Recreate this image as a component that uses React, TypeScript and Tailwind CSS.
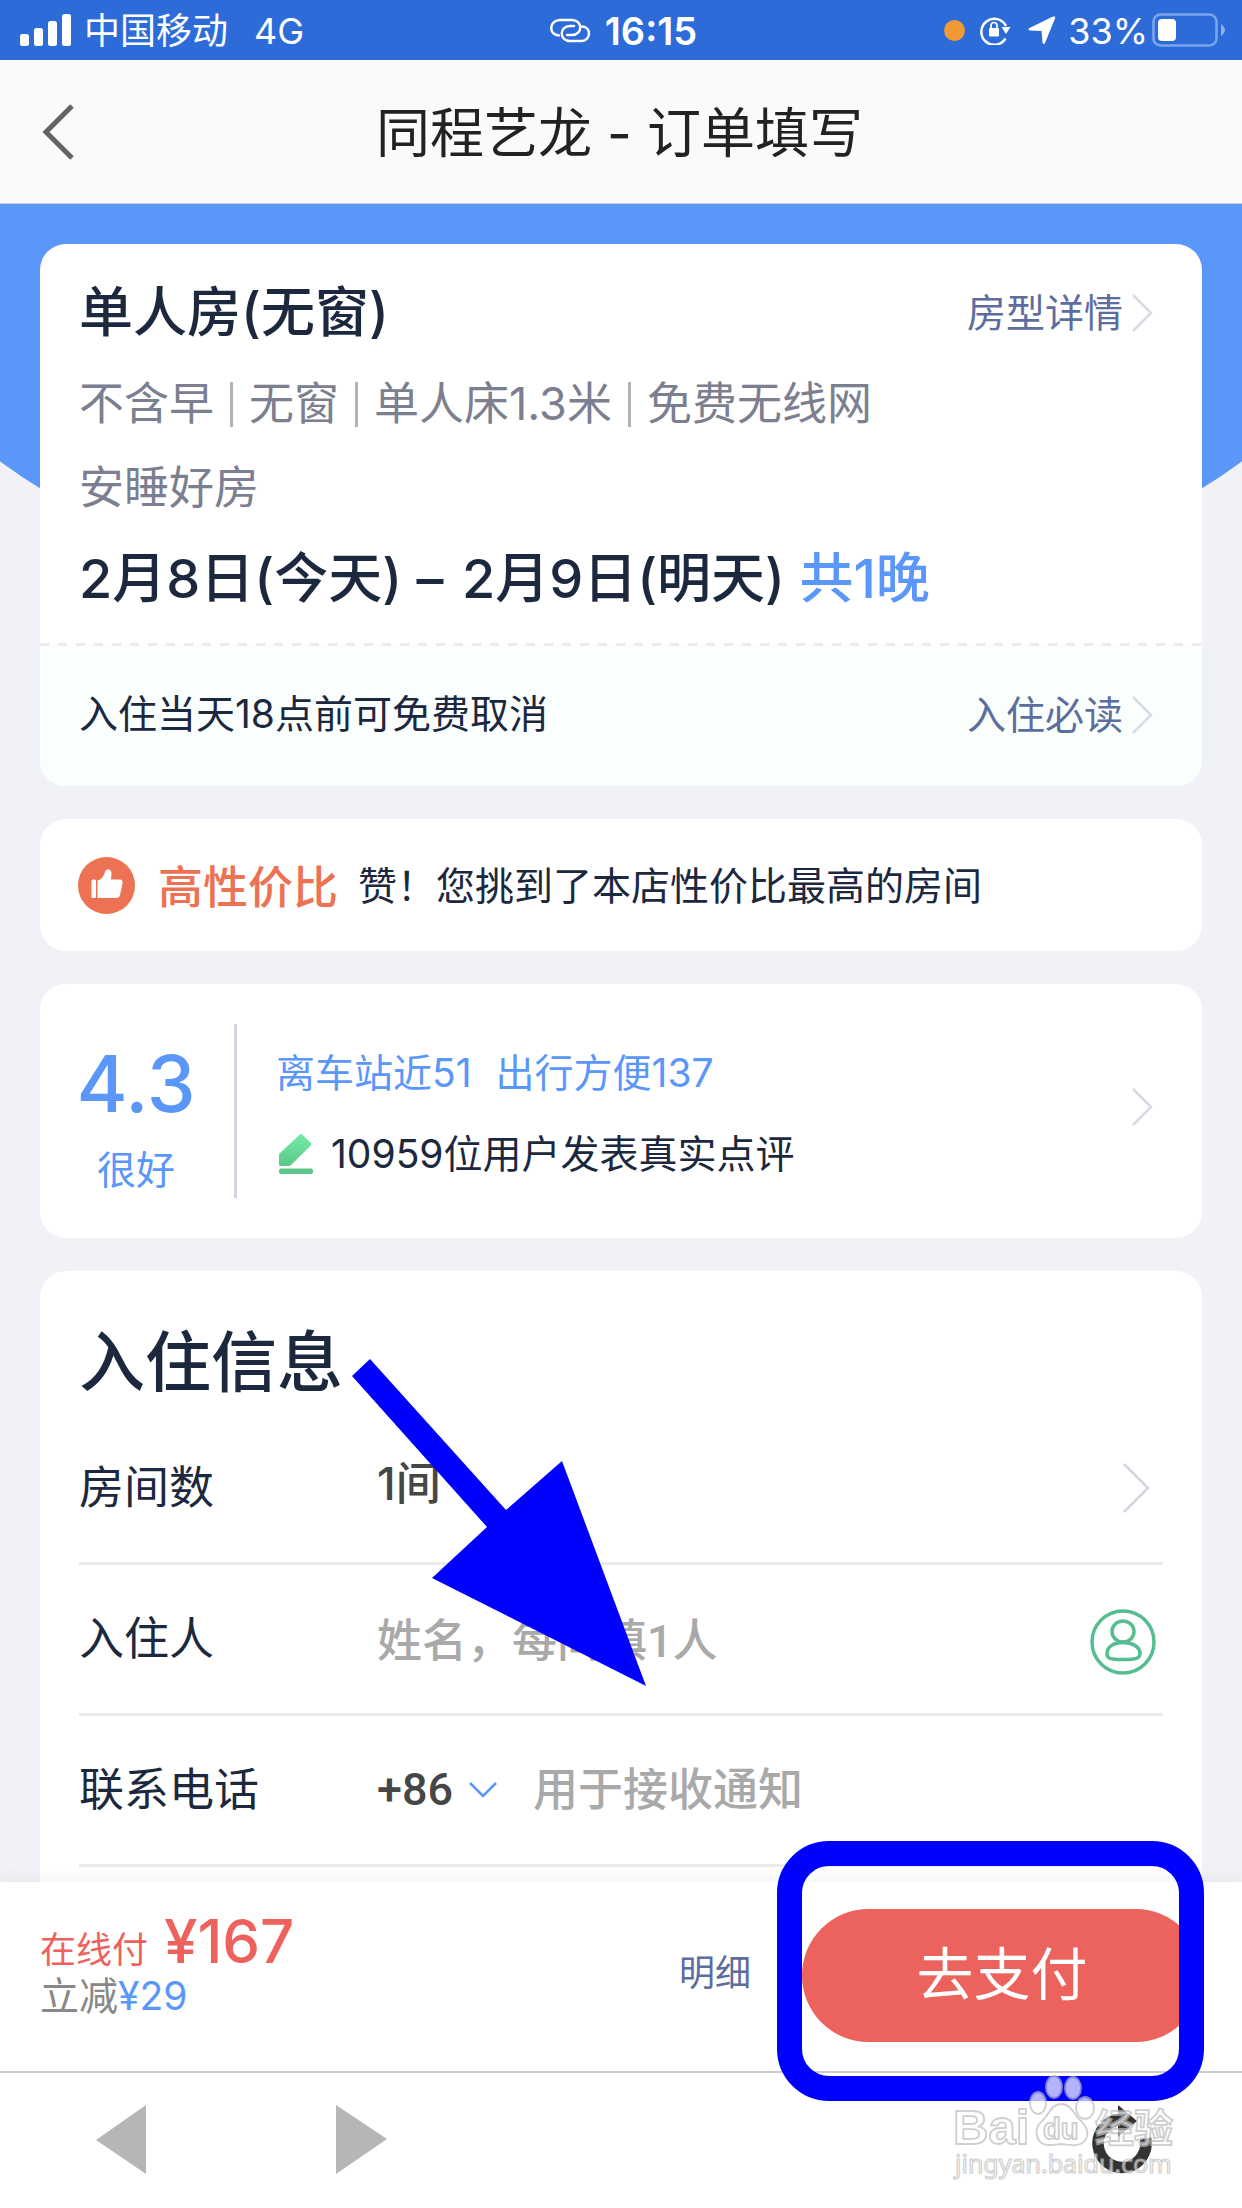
import React from "react";

function Chevron({ large = false }: { large?: boolean }) {
  return large ? (
    <svg className="h-[52px] w-7" viewBox="0 0 28 52" fill="none" aria-hidden="true">
      <path d="M2 2 26 26 2 50" stroke="#d3d8e3" strokeWidth="3" />
    </svg>
  ) : (
    <svg className="h-10 w-[22px]" viewBox="0 0 22 40" fill="none" aria-hidden="true">
      <path d="M2 2 20 20 2 38" stroke="#d8dbe4" strokeWidth="2.5" />
    </svg>
  );
}

function StatusBar() {
  return (
    <div className="flex h-[60px] items-center justify-between bg-[#2d6bd9] pr-4 pl-5 text-4xl text-white">
      <div className="flex flex-1 items-center">
        <svg className="mr-[13px] h-8 w-[51px]" viewBox="0 0 51 32" fill="#fff" aria-hidden="true">
          <rect x="0" y="20" width="9" height="12" rx="2.5" />
          <rect x="14" y="14" width="9" height="18" rx="2.5" />
          <rect x="28" y="7" width="9" height="25" rx="2.5" />
          <rect x="42" y="0" width="9" height="32" rx="2.5" />
        </svg>
        <span className="pt-0.5">中国移动</span>
        <span className="ml-[26px] pt-0.5">4G</span>
      </div>
      <div className="flex items-center gap-3.5">
        <svg className="h-7 w-[42px]" viewBox="0 0 42 28" fill="none" stroke="#fff" strokeWidth="2.4" strokeLinecap="round" aria-hidden="true">
          <path d="M10 19.500C-1 19 0 4 11 4h12c11 0 11 15 0 15h-5" />
          <path d="M33 10.500C43 11 42 25 32 25H21C10 25 10 10 21 10h4" />
        </svg>
        <span className="pt-0.5 text-[38px] font-semibold">16:15</span>
      </div>
      <div className="flex flex-1 items-center justify-end">
        <span className="mr-3.5 size-[21px] rounded-full bg-[#f09a37]" />
        <svg className="mr-[17px] h-[30px] w-8" viewBox="0 0 32 30" aria-hidden="true">
          <path d="M26.500 23.500A13 13 0 1 1 27 11" fill="none" stroke="#fff" strokeWidth="2.500" />
          <path d="M22.500 12h9l-4.500 7z" fill="#fff" />
          <rect x="10" y="13" width="10" height="8.500" rx="1" fill="#fff" />
          <path d="M12 13V10.500a3 3 0 0 1 6 0V13" fill="none" stroke="#fff" strokeWidth="1.700" />
        </svg>
        <svg className="mr-3 h-[29px] w-7" viewBox="0 0 28 29" aria-hidden="true">
          <path d="M27 2.500 17 27q-1.800 2.500-2.500-.8L13.500 15 2 14.500q-3-.8-.5-2.500L24.500.7Q28-.3 27 2.500Z" fill="#fff" />
        </svg>
        <span className="pt-0.5">33%</span>
        <svg className="ml-1 h-[34px] w-[74px]" viewBox="0 0 74 34" aria-hidden="true">
          <rect x="1.500" y="1.500" width="63" height="31" rx="7" fill="none" stroke="#7ba5ea" strokeWidth="2.600" />
          <rect x="6" y="6" width="18" height="22" rx="4" fill="#fff" />
          <path d="M69 11q8 6 0 12z" fill="#8fb2ec" />
        </svg>
      </div>
    </div>
  );
}

function NavBar() {
  return (
    <header className="relative flex h-36 items-center justify-center border-b border-[#c9cdd4] bg-[#fafafa]">
      <button type="button" aria-label="返回" className="absolute left-10">
        <svg className="h-[58px] w-9" viewBox="0 0 36 58" fill="none" aria-hidden="true">
          <path d="M32 3 6 29l26 26" stroke="#636363" strokeWidth="5" />
        </svg>
      </button>
      <h1 className="pt-[3px] pr-[3px] text-[54px] text-[#222]">同程艺龙 - 订单填写</h1>
    </header>
  );
}

function Tag({ children, last = false }: { children: React.ReactNode; last?: boolean }) {
  return last ? (
    <li>{children}</li>
  ) : (
    <li className="flex items-center">
      {children}
      <span className="mx-4 h-[45px] w-[3px] bg-[#b3b3b3]" />
    </li>
  );
}

function DetailLink({ children }: { children: React.ReactNode }) {
  return (
    <a href="#" className="flex items-center gap-2 text-[39px] leading-[54px] text-[#5c6d9e]">
      {children}
      <Chevron />
    </a>
  );
}

function RoomCard() {
  return (
    <section className="overflow-hidden rounded-[26px] bg-white">
      <div className="px-[39px] pt-[31px] pb-[26px]">
        <div className="flex items-center justify-between pr-2.5">
          <h2 className="text-[54px] leading-[76px] font-medium">单人房(无窗)</h2>
          <DetailLink>房型详情</DetailLink>
        </div>
        <ul className="my-[11px] flex flex-wrap text-[45px] leading-[84px] text-[#7b7f8f]">
          <Tag>不含早</Tag>
          <Tag>无窗</Tag>
          <Tag>单人床1.3米</Tag>
          <Tag last>免费无线网</Tag>
          <li className="basis-full">安睡好房</li>
        </ul>
        <p className="text-[54px] leading-[76px] font-medium">
          2月8日(今天) <span className="mr-1">–</span> 2月9日(明天) <span className="text-[#5b96f9]">共1晚</span>
        </p>
      </div>
      <div className="h-[3px] bg-[repeating-linear-gradient(90deg,#ebebeb_0_9px,#fafffd_9px_18px)]" />
      <div className="flex h-[140px] items-center justify-between bg-[#fafffd] pr-[49px] pb-[3px] pl-[39px]">
        <p className="text-[39px]">入住当天18点前可免费取消</p>
        <DetailLink>入住必读</DetailLink>
      </div>
    </section>
  );
}

function ValueCard() {
  return (
    <section className="flex h-[132px] items-center rounded-[26px] bg-white px-[38px]">
      <svg className="size-[57px]" viewBox="0 0 57 57" aria-hidden="true">
        <circle cx="28.500" cy="28.500" r="28.500" fill="#ed7153" />
        <rect x="13.500" y="22.500" width="4.500" height="18.500" rx="1.500" fill="#fff" />
        <path d="M19.500 23.500c4-1 6-4 7.500-8.500.5-3.500 6-4 6.500 1 .2 2.500-.3 4.500-.8 6.500H42c2 0 3 1.500 2.600 3.500L42 38c-.5 2-1.500 3-3.500 3h-19z" fill="#fff" />
      </svg>
      <strong className="ml-[23px] pt-[5px] text-[45px] font-medium text-[#ed7153]">高性价比</strong>
      <span className="ml-5 pt-[3px] text-[39px]">赞！您挑到了本店性价比最高的房间</span>
    </section>
  );
}

function ReviewCard() {
  return (
    <section className="flex h-[254px] items-center rounded-[26px] bg-white pr-[49px] pl-[39px] text-[39px]">
      <div className="flex w-[114px] flex-col items-center pt-[11px] text-[#5b96f9]">
        <span className="text-[78px] leading-[94px] font-medium">4.3</span>
        <span className="mt-3 leading-[54px]">很好</span>
      </div>
      <div className="mr-[39px] ml-[41px] h-[174px] w-[3px] bg-[#d0d6e2]" />
      <div className="flex flex-1 flex-col gap-[27px] pt-[5px] leading-[54px]">
        <p className="flex gap-6 text-[#5b96f9]">
          <span>离车站近51</span>
          <span>出行方便137</span>
        </p>
        <p className="flex items-center">
          <svg className="mr-[18px] ml-[3px] h-10 w-[34px]" viewBox="0 0 34 40" aria-hidden="true">
            <defs>
              <linearGradient id="pen" x1="0" y1="0" x2="0" y2="1">
                <stop offset="0" stopColor="#74eba8" />
                <stop offset="1" stopColor="#5cc888" />
              </linearGradient>
            </defs>
            <path d="M0 31V21.500q0-1.500 1-2.500L20.500.8q1.500-1.500 3 0l8.300 8.200q1 1.200 0 2.500L12 31q-1 1-2.500 1H1.500Q0 32 0 31Z" fill="url(#pen)" />
            <rect y="34.500" width="34" height="5.500" rx="2" fill="#5cc587" />
          </svg>
          <span>10959位用户发表真实点评</span>
        </p>
      </div>
      <a href="#" aria-label="查看点评" className="pb-2">
        <Chevron />
      </a>
    </section>
  );
}

const rowClass = "flex h-[151px] items-center border-b-[3px] border-[#ebebeb]";
const labelClass = "w-[298px] shrink-0";

function GuestForm() {
  return (
    <section className="relative shrink-0 rounded-t-[26px] bg-white px-[39px] pt-[51px] pb-40 text-[45px]">
      <h2 className="mb-3 text-[66px] leading-[80px] font-medium">入住信息</h2>
      <div className={rowClass}>
        <span className={labelClass} id="rooms">房间数</span>
        <button type="button" aria-labelledby="rooms" className="flex flex-1 items-center justify-between pr-[13px] text-left font-medium text-[#464646]">
          <span className="pb-2">1间</span>
          <Chevron large />
        </button>
      </div>
      <div className={rowClass}>
        <label className={labelClass} htmlFor="guest">入住人</label>
        <input id="guest" placeholder="姓名，每间填1人" className="min-w-0 flex-1 pt-[5px] font-[Roboto,'Noto_Sans_CJK_SC',sans-serif] font-medium outline-none placeholder:text-[#a9a9a9]" />
        <button type="button" aria-label="选择联系人" className="mr-[7px] pt-[5px]">
          <svg className="size-[66px]" viewBox="0 0 66 66" fill="none" stroke="#56bd91" strokeWidth="3.500" aria-hidden="true">
            <circle cx="33" cy="33" r="31" />
            <ellipse cx="33" cy="22.500" rx="11" ry="10.500" />
            <path d="M33 33.500c-9 0-16 4-16 11 0 5 3 6 16 6s17-1 17-6c0-7-8-11-17-11Z" />
          </svg>
        </button>
      </div>
      <div className={rowClass}>
        <label className={labelClass} htmlFor="phone">联系电话</label>
        <div className="relative mr-9 flex items-center">
          <select aria-label="国家区号" className="w-[120px] appearance-none font-[Roboto,sans-serif] font-medium text-[#464646] outline-none">
            <option>+86</option>
          </select>
          <svg className="pointer-events-none absolute right-0 h-4 w-7" viewBox="0 0 28 16" fill="none" aria-hidden="true">
            <path d="M1 1l13 13L27 1" stroke="#5b96f9" strokeWidth="2.500" />
          </svg>
        </div>
        <input id="phone" type="tel" placeholder="用于接收通知" className="min-w-0 flex-1 font-medium outline-none placeholder:text-[#a9a9a9]" />
      </div>
      <svg className="pointer-events-none absolute top-[88px] left-[312px] h-[327px] w-[294px]" viewBox="0 0 294 327" fill="#00f" aria-hidden="true">
        <path d="M18 0 154 151 210 102 294 327 80 219 135 168 0 17Z" />
      </svg>
    </section>
  );
}

function PayBar() {
  return (
    <div className="flex h-[189px] items-center bg-white px-10 pb-[3px] shadow-[0_-4px_14px_rgba(40,60,60,0.06)]">
      <div className="flex-1 pb-5">
        <p className="flex items-baseline gap-4 text-4xl text-[#ee625d]">
          在线付 <strong className="text-6xl font-medium">¥167</strong>
        </p>
        <p className="mt-0.5 text-[39px] leading-[46px] text-[#888]">
          立减<span className="text-[#5b96f9]">¥29</span>
        </p>
      </div>
      <button type="button" className="mr-[51px] pb-1 text-4xl text-[#5c6d9e]">明细</button>
      <div className="relative">
        <button type="button" className="block h-[133px] w-[400px] rounded-full bg-[#ec625d] text-[57px] text-white">去支付</button>
        <div className="pointer-events-none absolute -top-[68px] -right-[2px] -bottom-[59px] -left-[25px] z-10 rounded-[52px] border-[25px] border-[#00f]" />
      </div>
    </div>
  );
}

function Watermark() {
  return (
    <svg className="pointer-events-none absolute right-[60px] bottom-6 z-20 h-[110px] w-[236px]" viewBox="946 2074 236 110" opacity="0.7" fill="#fff" stroke="#bbb" strokeWidth="1.800" aria-hidden="true">
      <text x="953" y="2144" fontFamily="Liberation Sans, sans-serif" fontWeight="700" fontSize="49">Bai</text>
      <ellipse cx="1038" cy="2103" rx="8" ry="11" />
      <ellipse cx="1054" cy="2087" rx="8" ry="11" />
      <ellipse cx="1073" cy="2088" rx="8" ry="11" />
      <ellipse cx="1085" cy="2108" rx="9" ry="11" />
      <path d="M1061 2104c-9 0-11 8-16 14-5 5-10 9-8 18 3 12 15 9 24 8 9 1 22 4 26-7 2-9-4-14-9-19-5-6-8-14-17-14Z" />
      <text x="1043" y="2139" fontFamily="Liberation Sans, sans-serif" fontWeight="700" fontSize="29">du</text>
      <text x="1095" y="2142" fontFamily="Noto Sans CJK SC, sans-serif" fontWeight="700" fontSize="39">经验</text>
      <text x="955" y="2173" fontFamily="Noto Sans, sans-serif" fontSize="25" strokeWidth="1.200">jingyan.baidu.com</text>
    </svg>
  );
}

function BrowserBar() {
  return (
    <nav className="flex items-center border-t-2 border-[#ccc] bg-white pt-8 pr-[86px] pb-[34px] pl-24">
      <button type="button" aria-label="后退">
        <svg className="h-[69px] w-[51px]" viewBox="0 0 51 69" fill="#b6b6b6" aria-hidden="true">
          <path d="M50 0v69L0 35z" />
        </svg>
      </button>
      <button type="button" aria-label="前进" className="ml-[189px]">
        <svg className="h-[69px] w-[51px]" viewBox="0 0 51 69" fill="#b6b6b6" aria-hidden="true">
          <path d="M0 0v69l51-35z" />
        </svg>
      </button>
      <button type="button" aria-label="刷新" className="ml-auto">
        <svg className="h-[69px] w-16" viewBox="0 0 64 69" aria-hidden="true">
          <path d="M28 14.500A24 24 0 1 0 53.500 33.500" fill="none" stroke="#333" strokeWidth="11.500" />
          <path d="M26 0l19 16-19 16z" fill="#333" />
        </svg>
      </button>
    </nav>
  );
}

export default function App() {
  return (
    <div className="flex h-screen flex-col overflow-hidden bg-[#f1f2f8] font-[Inter,'Noto_Sans_CJK_SC',sans-serif] text-[#1c283e]">
      <StatusBar />
      <NavBar />
      <main className="relative min-h-0 flex-1 overflow-hidden">
        <div className="absolute -inset-x-[10%] top-0 h-[422px] rounded-b-[50%_368px] bg-[#5b96f9]" />
        <div className="relative flex flex-col gap-[33px] px-10 pt-10">
          <RoomCard />
          <ValueCard />
          <ReviewCard />
          <GuestForm />
        </div>
      </main>
      <footer className="relative">
        <PayBar />
        <BrowserBar />
        <Watermark />
      </footer>
    </div>
  );
}
